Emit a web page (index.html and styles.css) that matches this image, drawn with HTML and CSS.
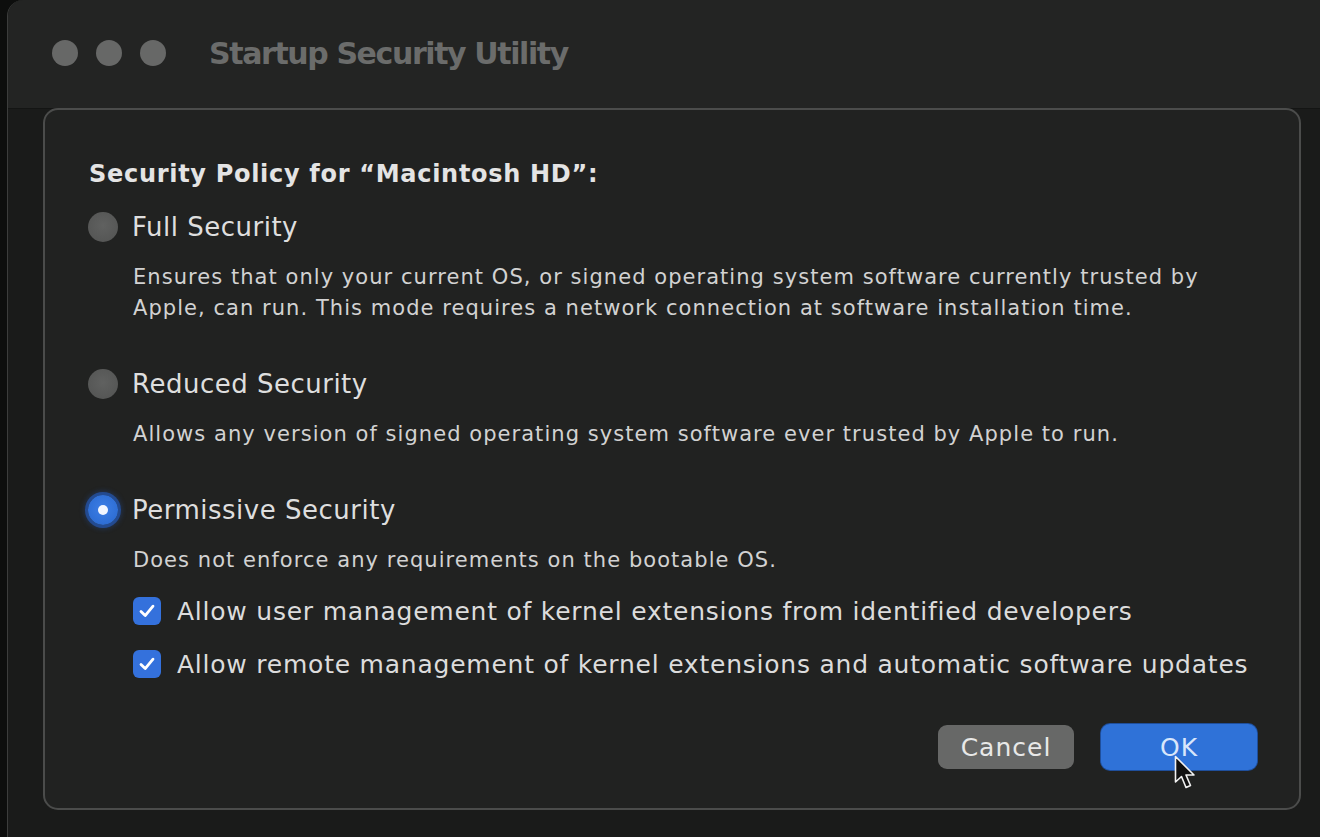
FILE: index.html
```html
<!DOCTYPE html>
<html>
<head>
<meta charset="utf-8">
<link rel="stylesheet" href="styles.css">
</head>
<body>
<div class="window">
  <div class="titlebar">
    <div class="lights">
      <span class="light"></span><span class="light"></span><span class="light"></span>
    </div>
    <div class="title">Startup Security Utility</div>
  </div>
  <div class="body">
    <div class="sheet">
      <div class="heading">Security Policy for “Macintosh HD”:</div>

      <div class="option opt-first">
        <span class="radio"></span>
        <span class="label">Full Security</span>
      </div>
      <p class="desc">Ensures that only your current OS, or signed operating system software currently trusted by<br>Apple, can run. This mode requires a network connection at software installation time.</p>

      <div class="option">
        <span class="radio"></span>
        <span class="label">Reduced Security</span>
      </div>
      <p class="desc">Allows any version of signed operating system software ever trusted by Apple to run.</p>

      <div class="option">
        <span class="radio radio-on"><span class="dot"></span></span>
        <span class="label">Permissive Security</span>
      </div>
      <p class="desc">Does not enforce any requirements on the bootable OS.</p>

      <div class="check-row check-first">
        <span class="checkbox"><svg width="20" height="20" viewBox="0 0 20 20"><path d="M4 10.5 L8.2 14.6 L16 5.2" fill="none" stroke="#ffffff" stroke-width="2.8" stroke-linecap="round" stroke-linejoin="round"/></svg></span>
        <span class="check-label">Allow user management of kernel extensions from identified developers</span>
      </div>
      <div class="check-row">
        <span class="checkbox"><svg width="20" height="20" viewBox="0 0 20 20"><path d="M4 10.5 L8.2 14.6 L16 5.2" fill="none" stroke="#ffffff" stroke-width="2.8" stroke-linecap="round" stroke-linejoin="round"/></svg></span>
        <span class="check-label">Allow remote management of kernel extensions and automatic software updates</span>
      </div>

      <div class="buttons">
        <button class="btn btn-cancel">Cancel</button>
        <button class="btn btn-ok">OK</button>
        <svg class="cursor" width="24" height="38" viewBox="0 0 24 38"><path d="M1.5 1.5 L1.5 27 L7.5 21.5 L12 32.5 L16.5 30.5 L12 20 L20 20 Z" fill="#111" stroke="#f2f2f2" stroke-width="1.6" stroke-linejoin="round"/></svg>
      </div>
    </div>
  </div>
</div>
</body>
</html>
```

FILE: styles.css
```css
html, body {
  margin: 0;
  padding: 0;
  background: #0d0e0d;
  width: 1320px;
  height: 837px;
  overflow: hidden;
  font-family: "DejaVu Sans", "Liberation Sans", sans-serif;
}

.window {
  margin-left: 7px;
  height: 837px;
  border-left: 1.5px solid #3c3d3c;
  border-top-left-radius: 16px;
  background: #1a1b1a;
  overflow: hidden;
  display: flex;
  flex-direction: column;
}

.titlebar {
  height: 109px;
  flex: none;
  background: #232423;
  border-bottom: 1px solid #141514;
  display: flex;
  align-items: center;
  padding-left: 44px;
  box-sizing: border-box;
}

.lights {
  display: flex;
  gap: 18px;
  padding-bottom: 2px;
}

.light {
  width: 26px;
  height: 26px;
  border-radius: 50%;
  background: #676867;
}

.title {
  margin-left: 43px;
  font-size: 30px;
  font-weight: bold;
  color: #6b6c6b;
  letter-spacing: -1.4px;
  padding-bottom: 2px;
}

.body {
  flex: 1;
  padding-left: 35px;
  padding-right: 19px;
  background: #1a1b1a;
}

.sheet {
  position: relative;
  margin-top: -1px;
  width: 1258px;
  height: 702px;
  box-sizing: border-box;
  border: 2px solid #4b4c4b;
  border-radius: 15px;
  background: #212221;
  padding: 49px 42px 0 44px;
  display: flex;
  flex-direction: column;
}

.heading {
  font-size: 24px;
  line-height: 30px;
  font-weight: bold;
  color: #e4e4e4;
  letter-spacing: 0.7px;
}

.option {
  display: flex;
  align-items: center;
  height: 34px;
  margin-top: 43px;
}

.opt-first {
  margin-top: 21px;
}

.radio {
  width: 30px;
  height: 30px;
  border-radius: 50%;
  background: radial-gradient(circle at 50% 45%, #606160 0%, #565756 70%, #4c4d4c 100%);
  flex: none;
  margin-left: -1px;
  display: flex;
  align-items: center;
  justify-content: center;
}

.radio-on {
  background: radial-gradient(circle at 50% 45%, #3d7ee6 0%, #2f6fd6 65%, #2a5fb8 100%);
  box-shadow: 0 0 0 3px rgba(36, 84, 170, 0.75), 0 0 5px 4px rgba(36, 84, 170, 0.35);
}

.dot {
  width: 10px;
  height: 10px;
  border-radius: 50%;
  background: #f2f6ff;
}

.label {
  margin-left: 14px;
  font-size: 26px;
  color: #dedede;
  letter-spacing: 0.5px;
}

.desc {
  margin: 18px 0 0 44px;
  font-size: 21px;
  line-height: 31px;
  color: #d2d2d2;
  letter-spacing: 1.05px;
}

.check-row {
  display: flex;
  align-items: center;
  height: 34px;
  margin-top: 19px;
  margin-left: 44px;
}

.check-first {
  margin-top: 18px;
}

.checkbox {
  width: 28px;
  height: 28px;
  border-radius: 6px;
  background: #3471dc;
  flex: none;
  display: flex;
  align-items: center;
  justify-content: center;
}

.check-label {
  margin-left: 16px;
  font-size: 25px;
  color: #dcdcdc;
  letter-spacing: 0.77px;
}

.buttons {
  position: relative;
  display: flex;
  justify-content: flex-end;
  gap: 27px;
  margin-top: 43px;
}

.btn {
  font-family: "DejaVu Sans", "Liberation Sans", sans-serif;
  font-size: 25px;
  letter-spacing: 1px;
  border: none;
  border-radius: 9px;
  height: 44px;
  padding: 0;
  color: #e8e8e8;
}

.btn-cancel {
  width: 136px;
  background: #676867;
  margin-top: 1px;
}

.btn-ok {
  width: 156px;
  height: 46px;
  background: #2f72d8;
  color: #d8e6fb;
  box-shadow: 0 0 0 1px #1f4f9c;
}

.cursor {
  position: absolute;
  right: 59px;
  top: 31px;
}
```
